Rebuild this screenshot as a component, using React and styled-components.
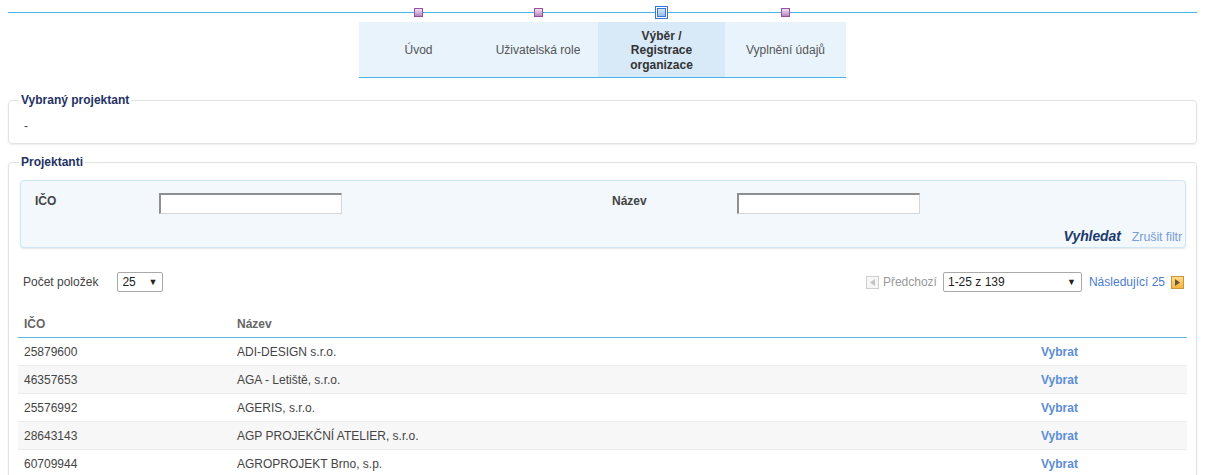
import styled, { createGlobalStyle } from "styled-components";

const GlobalStyle = createGlobalStyle`
  html, body {
    margin: 0;
    padding: 0;
    background: #fff;
  }
  body {
    font-family: "Liberation Sans", Arial, sans-serif;
    font-size: 12px;
    color: #333;
  }
`;

const Page = styled.div`
  padding: 0 8px;
`;

const steps = [
  { label: "Úvod", width: 119 },
  { label: "Uživatelská role", width: 120 },
  { label: "Výběr / Registrace organizace", width: 127, active: true },
  { label: "Vyplnění údajů", width: 121 },
];

const Stepper = styled.div`
  position: relative;
  height: 22px;
  display: flex;
  justify-content: center;
  &::before {
    content: "";
    position: absolute;
    left: 0;
    right: 0;
    top: 12px;
    height: 1px;
    background: #45b4ea;
  }
`;

const DotCell = styled.div`
  width: ${(p) => p.$w}px;
  display: flex;
  justify-content: center;
  align-items: flex-start;
  padding-top: ${(p) => (p.$active ? 6 : 8)}px;
  position: relative;
  z-index: 1;
`;

const Dot = styled.span`
  display: block;
  width: 7px;
  height: 7px;
  border: 1px solid #9b4fa0;
  background: linear-gradient(#f0e2f2, #b585bd);
`;

const ActiveDot = styled.span`
  display: flex;
  align-items: center;
  justify-content: center;
  width: 11px;
  height: 11px;
  border: 1px solid #3b74d8;
  background: #fff;
  span {
    width: 7px;
    height: 7px;
    border: 1px solid #3b74d8;
    background: linear-gradient(#d3e4f8, #98bdea);
  }
`;

const Tabs = styled.div`
  display: flex;
  justify-content: center;
`;

const TabRow = styled.div`
  display: flex;
  border-bottom: 1px solid #45b4ea;
  background: #e8f3fc;
`;

const Tab = styled.div`
  width: ${(p) => p.$w}px;
  height: 55px;
  display: flex;
  align-items: center;
  justify-content: center;
  text-align: center;
  line-height: 14.5px;
  padding: 2px 14px 0;
  box-sizing: border-box;
  color: ${(p) => (p.$active ? "#333" : "#555")};
  font-weight: ${(p) => (p.$active ? "bold" : "normal")};
  background: ${(p) => (p.$active ? "#d8e9f8" : "transparent")};
`;

const Fieldset = styled.fieldset`
  margin: ${(p) => p.$mt}px 0 0;
  padding: 0 10px ${(p) => p.$pb || 0}px;
  border: 1px solid #e3e3e3;
  border-radius: 4px;
  box-shadow: 0 1px 2px rgba(0, 0, 0, 0.08);
  min-width: 0;
`;

const Legend = styled.legend`
  padding: 0 2px;
  font-weight: bold;
  color: #1f3264;
  line-height: 14px;
`;

const Selected = styled.div`
  padding: 11px 5px 9px;
  line-height: 16px;
  color: #444;
`;

const FilterBox = styled.div`
  margin: 11px 0 0 1px;
  height: 66px;
  border: 1px solid #cfe6f3;
  border-radius: 4px;
  background: #f2f8fc;
  box-shadow: 0 1px 2px rgba(0, 0, 0, 0.1);
  display: flex;
  flex-direction: column;
  justify-content: space-between;
`;

const FilterGrid = styled.div`
  display: grid;
  grid-template-columns: 124px 183px 270px 125px 183px;
  align-items: start;
  padding: 12px 0 0 14px;
`;

const Label = styled.label`
  font-weight: bold;
  color: #444;
  line-height: 14px;
  padding-top: 1px;
`;

const Input = styled.input`
  width: 183px;
  height: 21px;
  box-sizing: border-box;
  margin: 0;
  border: 1px solid;
  border-color: #8f8f8f #d6d6d6 #d6d6d6 #8f8f8f;
  border-width: 2px 1px 1px 2px;
  background: #fff;
  font: inherit;
`;

const FilterActions = styled.div`
  display: flex;
  justify-content: flex-end;
  align-items: baseline;
  gap: 11px;
  padding: 0 3px 3px 0;
`;

const SearchLink = styled.a`
  font-size: 14px;
  font-weight: bold;
  font-style: italic;
  color: #1c3a6b;
  letter-spacing: -0.1px;
`;

const ClearLink = styled.a`
  font-size: 12.5px;
  color: #7a9dd8;
  letter-spacing: -0.1px;
`;

const Toolbar = styled.div`
  display: flex;
  justify-content: space-between;
  align-items: center;
  margin-top: 24px;
  padding: 0 2px 0 4px;
`;

const Group = styled.div`
  display: flex;
  align-items: center;
`;

const Muted = styled.span`
  color: ${(p) => p.$color || "#444"};
  margin: ${(p) => p.$m || "0"};
`;

const SelectBox = styled.div`
  width: ${(p) => p.$w}px;
  height: 20px;
  box-sizing: border-box;
  border: 1px solid #a9a9a9;
  border-radius: 2px;
  background: #fff;
  display: flex;
  align-items: center;
  justify-content: space-between;
  padding: 0 5px 0 4px;
  color: #222;
  span {
    font-size: 9px;
  }
`;

const PageIcon = styled.span`
  width: 11px;
  height: 11px;
  border: 1px solid ${(p) => (p.$next ? "#c8963c" : "#cfcfcf")};
  background: ${(p) =>
    p.$next ? "linear-gradient(#ffdc88, #f4b441)" : "#f6f6f6"};
  display: flex;
  align-items: center;
  justify-content: center;
`;

const Table = styled.table`
  width: calc(100% + 2px);
  margin: 19px 0 0 -1px;
  border-collapse: collapse;
  th, td {
    padding: 0 6px;
    text-align: left;
  }
  th {
    height: 26px;
    font-weight: bold;
    color: #666;
    border-bottom: 1px solid #5bb8e0;
  }
  td {
    height: 27px;
    border-bottom: 1px solid #ececec;
    color: #444;
  }
  tbody tr:nth-child(even) td {
    background: #f7f7f7;
  }
`;

const ActionCell = styled.td`
  width: 140px;
`;

const PickLink = styled.a`
  font-weight: bold;
  color: #5b8dd9;
`;

const rows = [
  ["25879600", "ADI-DESIGN s.r.o."],
  ["46357653", "AGA - Letiště, s.r.o."],
  ["25576992", "AGERIS, s.r.o."],
  ["28643143", "AGP PROJEKČNÍ ATELIER, s.r.o."],
  ["60709944", "AGROPROJEKT Brno, s.p."],
];

const Triangle = ({ dir, color }) => (
  <svg width="5" height="7" viewBox="0 0 5 7">
    {dir === "left" ? (
      <path d="M5 0 L0 3.5 L5 7 Z" fill={color} />
    ) : (
      <path d="M0 0 L5 3.5 L0 7 Z" fill={color} />
    )}
  </svg>
);

export default function App() {
  return (
    <Page>
      <GlobalStyle />
      <Stepper>
        {steps.map((s) => (
          <DotCell key={s.label} $w={s.width} $active={s.active}>
            {s.active ? (
              <ActiveDot>
                <span />
              </ActiveDot>
            ) : (
              <Dot />
            )}
          </DotCell>
        ))}
      </Stepper>
      <Tabs>
        <TabRow>
          {steps.map((s) => (
            <Tab key={s.label} $w={s.width} $active={s.active}>
              {s.label}
            </Tab>
          ))}
        </TabRow>
      </Tabs>

      <Fieldset $mt={15}>
        <Legend>Vybraný projektant</Legend>
        <Selected>-</Selected>
      </Fieldset>

      <Fieldset $mt={11} $pb={20}>
        <Legend>Projektanti</Legend>
        <FilterBox>
          <FilterGrid>
            <Label>IČO</Label>
            <Input />
            <span />
            <Label>Název</Label>
            <Input />
          </FilterGrid>
          <FilterActions>
            <SearchLink>Vyhledat</SearchLink>
            <ClearLink>Zrušit filtr</ClearLink>
          </FilterActions>
        </FilterBox>

        <Toolbar>
          <Group>
            <Muted $m="0 19px 0 0">Počet položek</Muted>
            <SelectBox $w={46}>
              25<span>▼</span>
            </SelectBox>
          </Group>
          <Group>
            <PageIcon>
              <Triangle dir="left" color="#c4c4c4" />
            </PageIcon>
            <Muted $color="#999" $m="0 6px 0 4px">Předchozí</Muted>
            <SelectBox $w={139}>
              1-25 z 139<span>▼</span>
            </SelectBox>
            <Muted $color="#4a7bd0" $m="0 6px 0 7px">Následující 25</Muted>
            <PageIcon $next>
              <Triangle dir="right" color="#6b5434" />
            </PageIcon>
          </Group>
        </Toolbar>

        <Table>
          <thead>
            <tr>
              <th style={{ width: 201 }}>IČO</th>
              <th>Název</th>
              <th />
            </tr>
          </thead>
          <tbody>
            {rows.map(([ico, name]) => (
              <tr key={ico}>
                <td>{ico}</td>
                <td>{name}</td>
                <ActionCell>
                  <PickLink>Vybrat</PickLink>
                </ActionCell>
              </tr>
            ))}
          </tbody>
        </Table>
      </Fieldset>
    </Page>
  );
}
